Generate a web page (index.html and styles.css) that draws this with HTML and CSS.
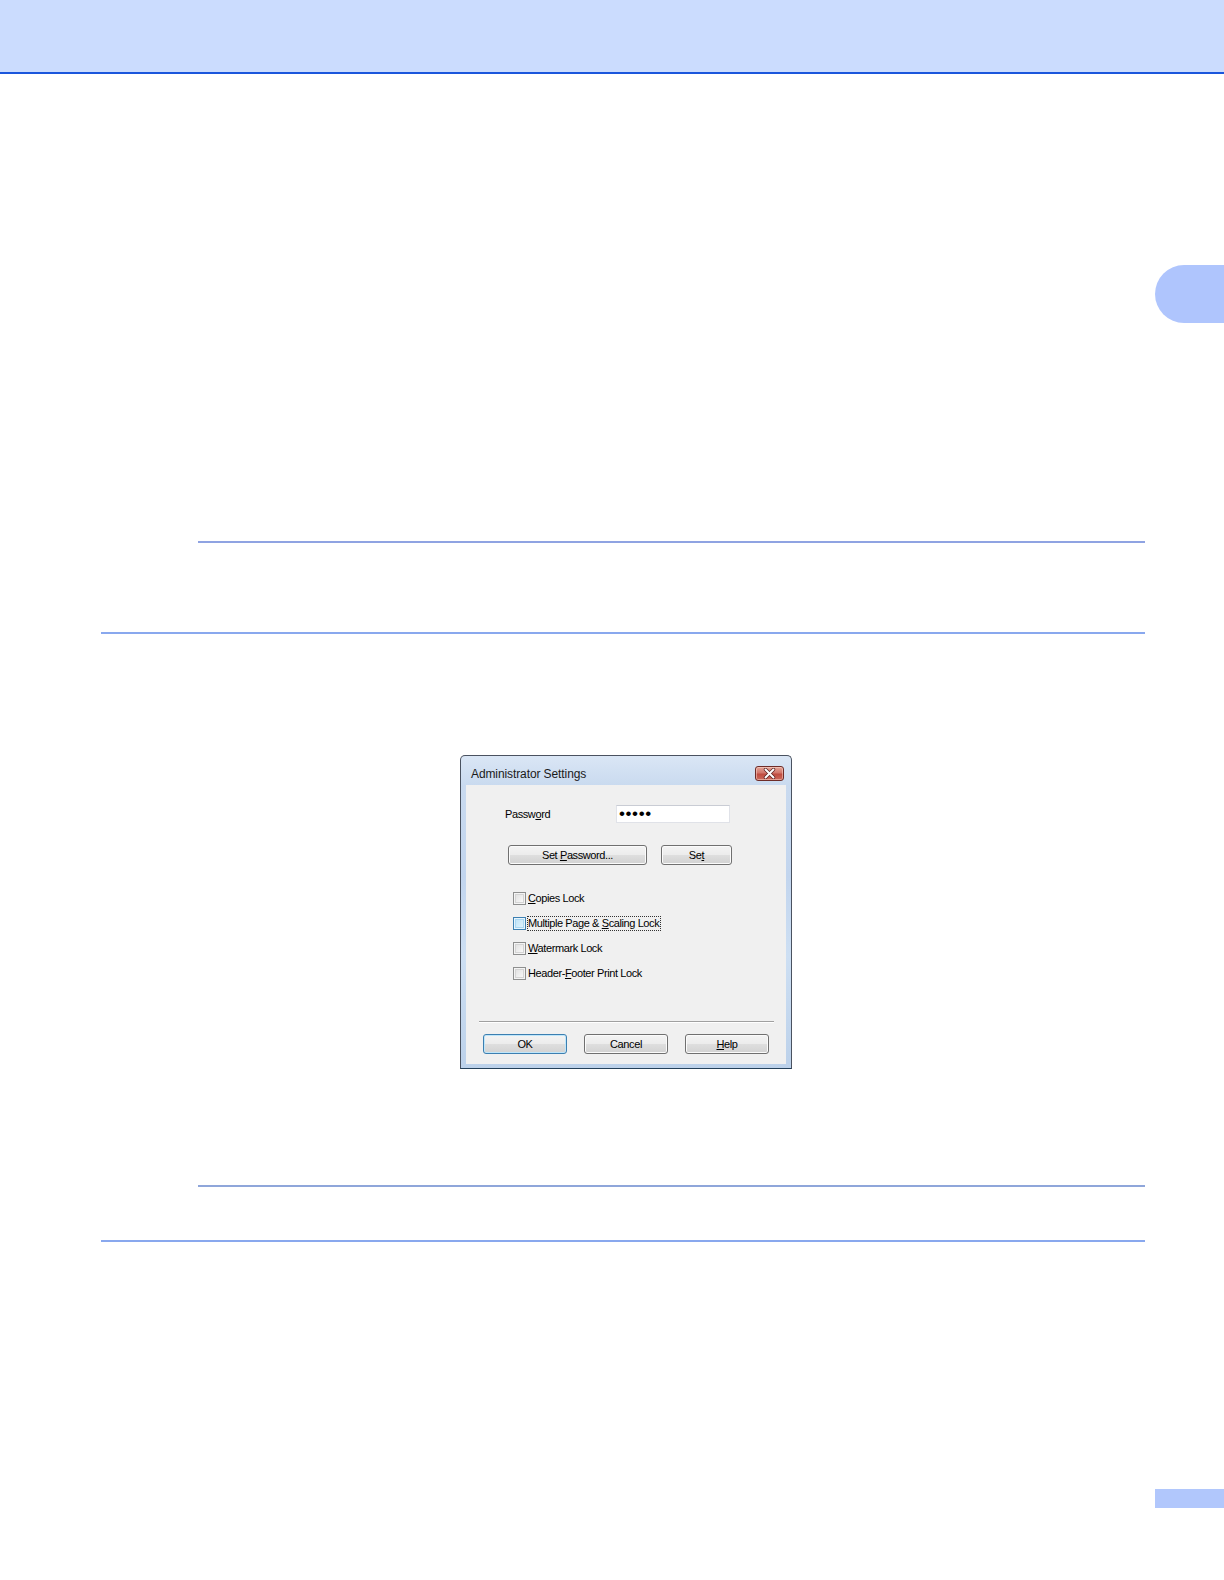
FILE: index.html
```html
<!DOCTYPE html>
<html>
<head>
<meta charset="utf-8">
<title>Administrator Settings</title>
<link rel="stylesheet" href="styles.css">
</head>
<body>
<header class="topbar"></header>
<div class="side-tab"></div>
<main class="content">
  <div class="rule rule-indent rule-a"></div>
  <div class="rule rule-full rule-b"></div>

  <div class="dialog-wrap">
    <div class="dialog">
      <div class="titlebar">
        <span class="title">Administrator Settings</span>
        <span class="close-btn">
          <svg width="13" height="11" viewBox="0 0 13 11">
            <path d="M2.5 1.5 L10.5 9.5 M10.5 1.5 L2.5 9.5" stroke="#5a2020" stroke-width="3.4" stroke-linecap="round"/>
            <path d="M2.5 1.5 L10.5 9.5 M10.5 1.5 L2.5 9.5" stroke="#ffffff" stroke-width="2" stroke-linecap="round"/>
          </svg>
        </span>
      </div>
      <div class="client">
        <div class="pw-row">
          <span class="label">Passw<u>o</u>rd</span>
          <span class="field">•••••</span>
        </div>
        <div class="btn-row">
          <span class="btn btn-setpw"><span class="btxt">Set <u>P</u>assword...</span></span>
          <span class="btn btn-set"><span class="btxt">Se<u>t</u></span></span>
        </div>
        <ul class="checks">
          <li class="check"><span class="box"></span><span class="ctext"><u>C</u>opies Lock</span></li>
          <li class="check"><span class="box box-hot"></span><span class="ctext focus">Multiple Page &amp; <u>S</u>caling Lock</span></li>
          <li class="check"><span class="box"></span><span class="ctext"><u>W</u>atermark Lock</span></li>
          <li class="check"><span class="box"></span><span class="ctext">Header-<u>F</u>ooter Print Lock</span></li>
        </ul>
        <div class="separator"></div>
        <div class="footer">
          <span class="btn btn-foot btn-default"><span class="btxt">OK</span></span>
          <span class="btn btn-foot"><span class="btxt">Cancel</span></span>
          <span class="btn btn-foot"><span class="btxt"><u>H</u>elp</span></span>
        </div>
      </div>
    </div>
  </div>

  <div class="rule rule-indent rule-c"></div>
  <div class="rule rule-full rule-d"></div>
</main>
<div class="page-tab"></div>
</body>
</html>
```

FILE: styles.css
```css
html, body {
  margin: 0;
  padding: 0;
  background: #ffffff;
}
body {
  width: 1224px;
  min-height: 1580px;
  position: relative;
  font-family: "Liberation Sans", Arial, sans-serif;
}

.topbar {
  display: block;
  height: 72px;
  background: #cbdcfe;
  border-bottom: 2px solid #1a56dc;
}

.side-tab {
  position: absolute;
  left: 1155px;
  top: 265px;
  width: 69px;
  height: 58px;
  border-radius: 29px 0 0 29px;
  background: #afc5fd;
}

.page-tab {
  position: absolute;
  left: 1155px;
  top: 1489px;
  width: 69px;
  height: 19px;
  background: #b1c7fc;
}

.content {
  display: block;
  margin-left: 101px;
  width: 1044px;
}

.rule {
  height: 2px;
}
.rule-indent {
  margin-left: 97px;
}
.rule-a {
  margin-top: 467px;
  background: #8fa3e2;
}
.rule-b {
  margin-top: 89px;
  background: #89a8ee;
}
.rule-c {
  margin-top: 116px;
  background: #8fa6da;
}
.rule-d {
  margin-top: 53px;
  background: #89a8ee;
}

.dialog-wrap {
  margin-top: 121px;
  padding-left: 359px;
}

.dialog {
  width: 330px;
  height: 312px;
  border: 1px solid #4a5260;
  border-bottom-color: #24405a;
  border-radius: 5px 5px 0 0;
  background: linear-gradient(to bottom, #dae6f5 0px, #c9daef 30px, #c2d5ee 120px, #cddff3 200px, #bcd1ea 312px);
  display: flex;
  flex-direction: column;
}

.titlebar {
  height: 29px;
  display: flex;
  align-items: flex-start;
  justify-content: space-between;
  padding: 0 7px 0 10px;
}
.title {
  font-size: 12px;
  color: #1a1a1a;
  margin-top: 11px;
  letter-spacing: -0.1px;
}
.close-btn {
  margin-top: 10px;
  width: 27px;
  height: 13px;
  border: 1px solid #6e2c28;
  border-radius: 3px;
  background: linear-gradient(to bottom, #e4a497 0%, #d2766b 45%, #c04c40 55%, #cc6a5c 100%);
  display: flex;
  align-items: center;
  justify-content: center;
  box-shadow: inset 0 0 0 1px rgba(255, 220, 210, 0.5);
}
.close-btn svg {
  display: block;
}

.client {
  margin: 0 5px 0 5px;
  height: 279px;
  background: #f0f0f0;
  font-size: 11px;
  letter-spacing: -0.4px;
  color: #000;
  box-sizing: border-box;
  padding-top: 20px;
}

.pw-row {
  display: flex;
  align-items: center;
  height: 18px;
  padding-left: 39px;
}
.label {
  width: 111px;
}
.field {
  box-sizing: border-box;
  width: 114px;
  height: 18px;
  background: #ffffff;
  border: 1px solid #e0e2e8;
  border-top-color: #c9ccd4;
  font-size: 17px;
  letter-spacing: 0.6px;
  line-height: 15px;
  padding-left: 2px;
  color: #000;
  overflow: hidden;
}

.btn {
  box-sizing: border-box;
  display: flex;
  align-items: center;
  justify-content: center;
  height: 20px;
  border: 1px solid #707070;
  border-radius: 3px;
  background: linear-gradient(to bottom, #f4f4f4 0%, #ececec 48%, #dedede 52%, #d2d2d2 100%);
  box-shadow: inset 0 0 0 1px #fbfbfb;
  color: #000;
  white-space: nowrap;
}
.btxt {
  display: block;
}

.btn-row {
  display: flex;
  gap: 14px;
  margin-top: 22px;
  padding-left: 42px;
}
.btn-setpw {
  width: 139px;
}
.btn-set {
  width: 71px;
}

.checks {
  list-style: none;
  margin: 21px 0 0 0;
  padding: 0 0 0 47px;
}
.check {
  display: flex;
  align-items: center;
  height: 25px;
}
.box {
  box-sizing: border-box;
  width: 13px;
  height: 13px;
  border: 1px solid #8e8f8f;
  background: linear-gradient(135deg, #dcdcdc 0%, #f4f4f4 70%, #ffffff 100%);
  box-shadow: inset 0 0 0 1px #f4f4f4, inset 0 0 0 2px #d4d4d4;
  margin-right: 1px;
}
.box-hot {
  border-color: #3c7fb1;
  background: linear-gradient(135deg, #b9e0f6 0%, #d8effb 70%, #e9f7fe 100%);
  box-shadow: inset 0 0 0 1px #e8f5fd, inset 0 0 0 2px #a9d7f2;
}
.ctext {
  padding: 0 1px 0 0;
  border: 1px dotted transparent;
  line-height: 13px;
}
.ctext.focus {
  border-color: #333;
}

.separator {
  margin: 35px 12px 0 13px;
  height: 1px;
  background: #a0a0a0;
  border-bottom: 1px solid #ffffff;
}

.footer {
  display: flex;
  gap: 17px;
  margin-top: 11px;
  padding-left: 17px;
}
.btn-foot {
  width: 84px;
}
.btn-default {
  border-color: #3c7fb1;
  box-shadow: inset 0 0 0 1px #bfe6fa;
}
```
